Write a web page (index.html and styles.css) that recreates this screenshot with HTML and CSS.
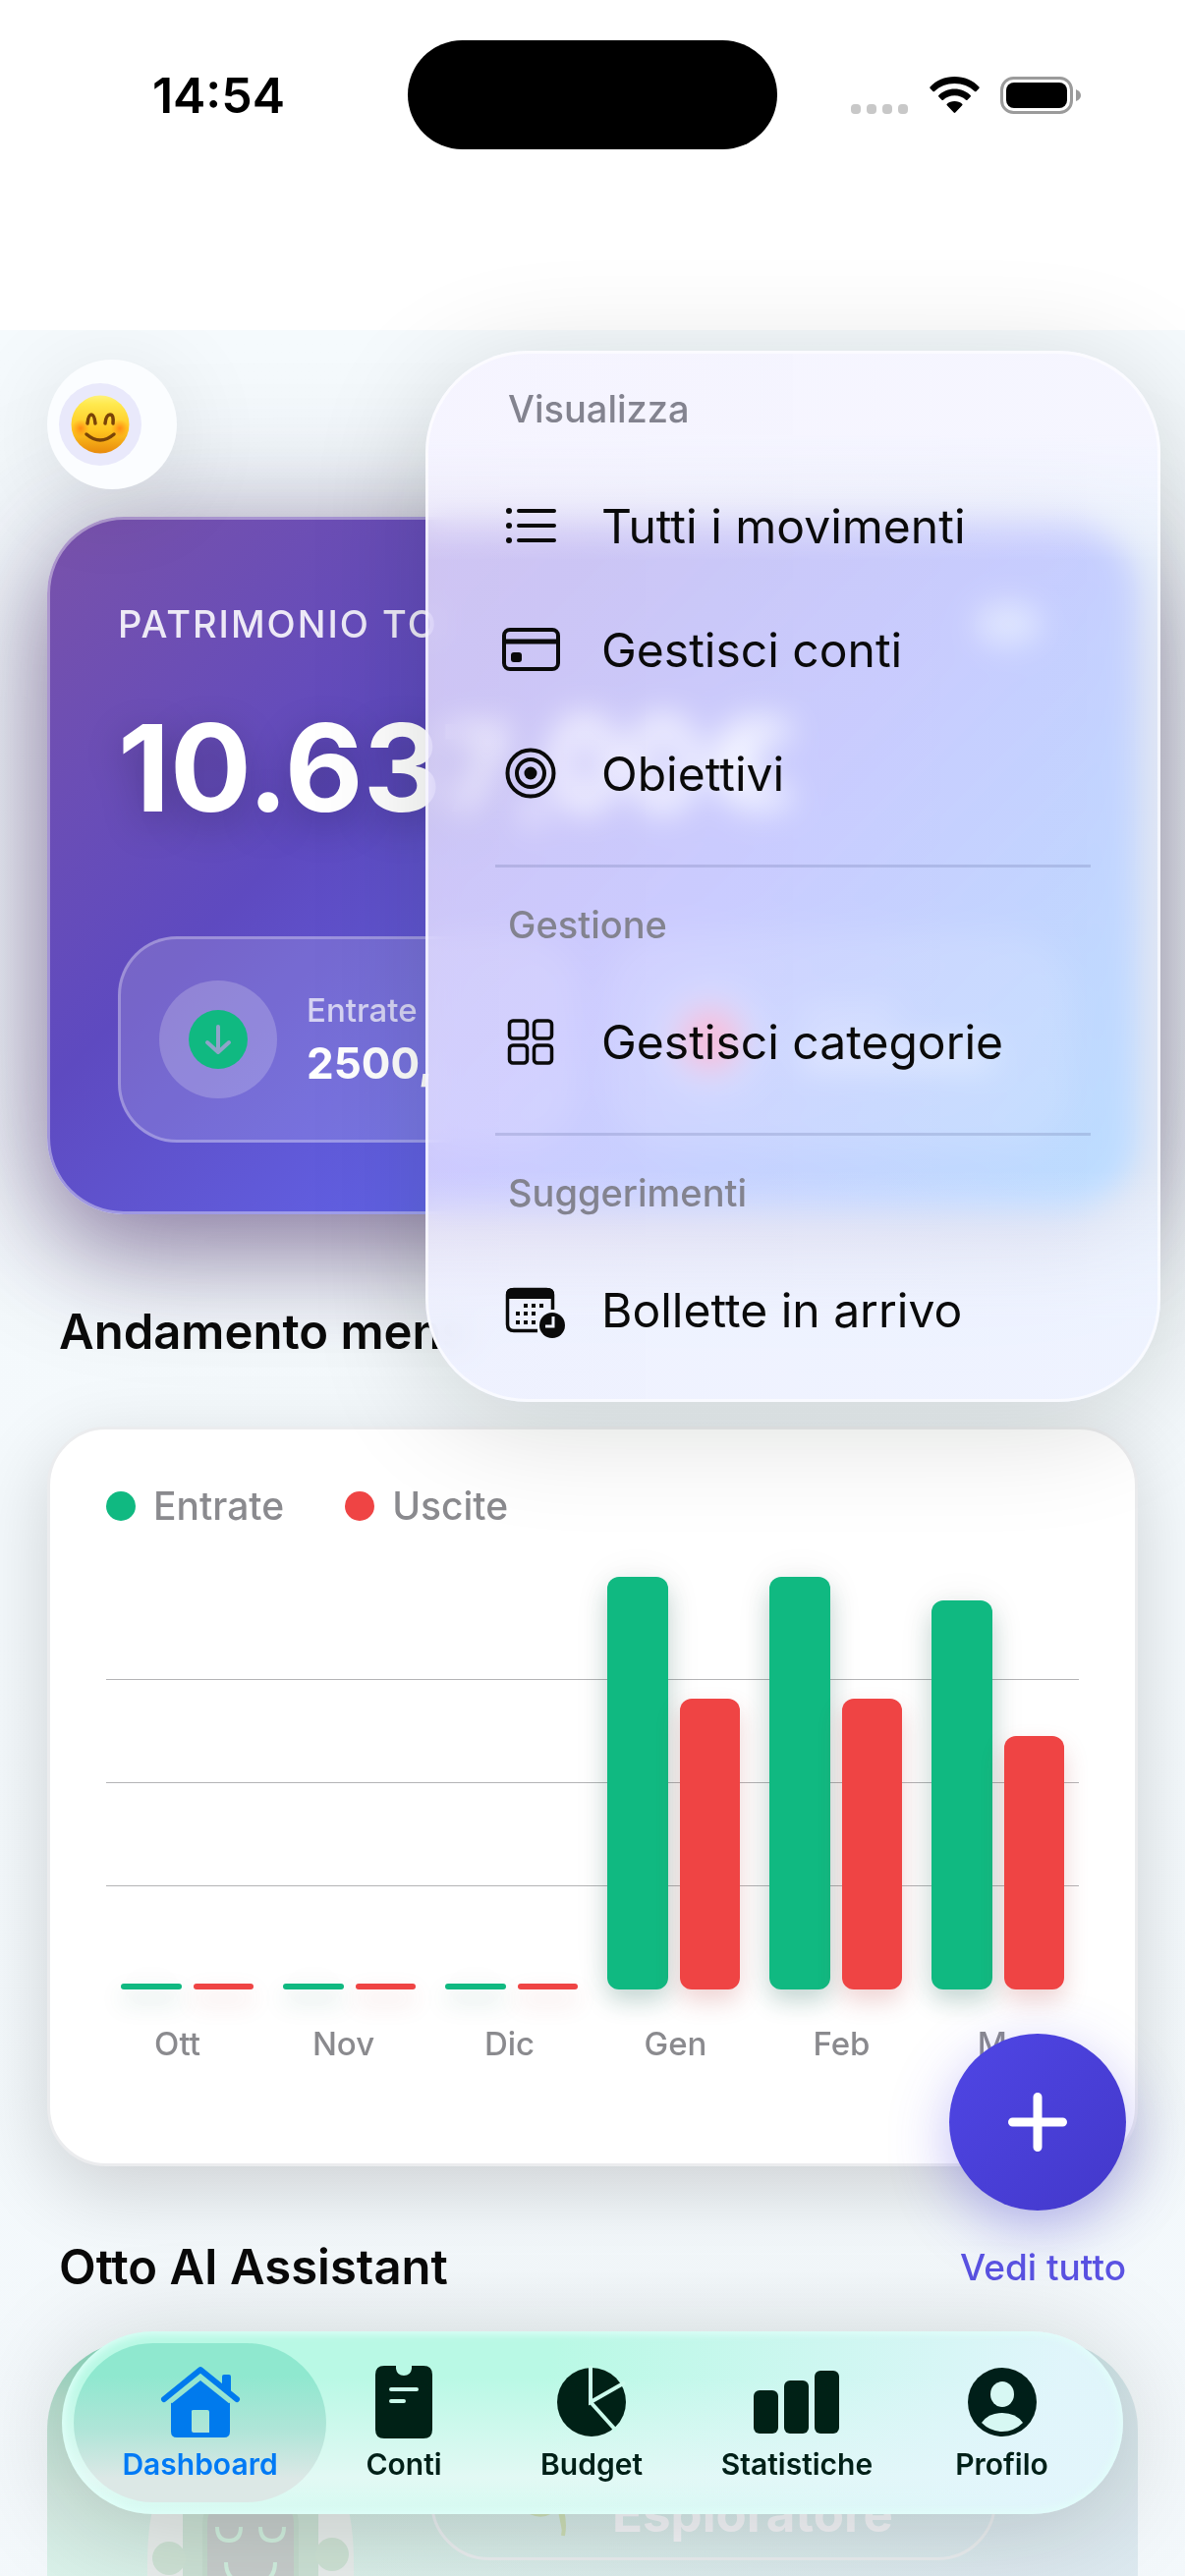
FILE: index.html
```html
<!DOCTYPE html>
<html lang="it">
<head>
    <meta charset="UTF-8">
    <meta name="viewport" content="width=device-width, initial-scale=1">
    <title>Dashboard</title>
    <link rel="stylesheet" href="styles.css">
</head>
<body>
<div class="screen">
    <header class="status-bar">
        <span class="time">14:54</span>
        <span class="island"></span>
        <div class="status-icons">
            <svg width="59" height="38" viewBox="0 0 59 38"><g fill="#c8c8c8"><rect y="28" width="10" height="10" rx="4"/><rect x="16" y="28" width="10" height="10" rx="4"/><rect x="32" y="28" width="10" height="10" rx="4"/><rect x="48" y="28" width="10" height="10" rx="4"/></g></svg>
            <svg width="51" height="38" viewBox="0 0 51 38"><path d="M25.500 0C35.500 0 44.500 4 50.500 10.500Q51 11.300 50.400 12L47.500 15Q46.700 15.600 46 15C40.500 9.800 33.500 7 25.500 7S10.500 9.800 5 15Q4.300 15.600 3.500 15L.600 12Q0 11.300 .500 10.500C6.500 4 15.500 0 25.500 0Z"/><path d="M25.500 12.500C32 12.500 37.500 15 41.700 19Q42.300 19.800 41.700 20.500L38.500 23.700Q37.800 24.300 37 23.700C34 21 30 19.300 25.500 19.300S17 21 14 23.700Q13.200 24.300 12.500 23.700L9.300 20.500Q8.700 19.800 9.300 19C13.500 15 19 12.500 25.500 12.500Z"/><path d="M25.500 25C28.700 25 31.200 26 33.200 27.700Q34 28.500 33.200 29.300L26.300 36.500Q25.500 37.300 24.700 36.500L17.800 29.300Q17 28.500 17.800 27.700C19.800 26 22.300 25 25.500 25Z"/></svg>
            <svg width="82" height="38" viewBox="0 0 82 38"><rect x="1.500" y="1.500" width="71" height="35" rx="12" fill="none" stroke="#9b9b9b" stroke-width="3"/><rect x="6" y="6" width="62" height="26" rx="8"/><path d="M77 13Q82 15 82 19T77 25Z" fill="#9b9b9b"/></svg>
        </div>
    </header>

    <main class="content">
        <button class="avatar" aria-label="Profilo">
            <span class="avatar-face">
                <svg width="60" height="60" viewBox="0 0 60 60">
                    <defs>
                        <linearGradient id="face" x1="0" y1="0" x2="0" y2="1"><stop offset="0" stop-color="#fff27a"/><stop offset=".15" stop-color="#ffe94e"/><stop offset=".6" stop-color="#ffc61f"/><stop offset="1" stop-color="#e88a0c"/></linearGradient>
                        <radialGradient id="cheek"><stop offset="0" stop-color="#ff7a10" stop-opacity=".8"/><stop offset="1" stop-color="#ff8a10" stop-opacity="0"/></radialGradient>
                    </defs>
                    <circle cx="30" cy="30" r="29.500" fill="url(#face)"/>
                    <circle cx="10" cy="34" r="9" fill="url(#cheek)"/><circle cx="50" cy="34" r="9" fill="url(#cheek)"/>
                    <g fill="none" stroke="#7a4408" stroke-linecap="round" stroke-width="3.500"><path d="M17 29Q18 20 21 20T25 29"/><path d="M35 29Q36 20 40 20T43 29"/><path d="M16 40Q30 52 44 40"/></g>
                </svg>
            </span>
        </button>

        <section class="balance">
            <div class="balance-label"><span>PATRIMONIO TO</span>
                <svg class="eye" width="72" height="54" viewBox="0 0 72 54"><path d="M3 27Q36-12 69 27Q36 66 3 27Z" fill="#fff"/><circle cx="36" cy="27" r="10" fill="#5b6fe0"/></svg>
            </div>
            <div class="balance-amount">
                <span>10.637</span>
                <svg width="280" height="110" viewBox="0 0 280 110"><g fill="none" stroke="#fff" stroke-width="24"><path d="M6 86V110"/><ellipse cx="62" cy="50" rx="26" ry="40"/><ellipse cx="142" cy="50" rx="26" ry="40"/><path d="M270 20Q205 0 205 50T270 80M190 40H240M190 60H240"/></g></svg>
            </div>
            <div class="tiles">
                <div class="tile">
                    <span class="tile-icon"><svg width="60" height="60" viewBox="0 0 60 60"><circle cx="30" cy="30" r="30" fill="#10b981"/><path d="M30 17V43M19 33L30 43L41 33" fill="none" stroke="#8fa3c9" stroke-width="4" stroke-linecap="round" stroke-linejoin="round"/></svg></span>
                    <div><div class="tile-label">Entrate</div><div class="tile-value">2500,</div></div>
                </div>
                <div class="tile">
                    <span class="tile-icon"><svg width="60" height="60" viewBox="0 0 60 60"><circle cx="30" cy="30" r="30" fill="#ff2f68"/></svg></span>
                    <svg width="200" height="80" viewBox="0 0 200 80"><rect y="8" width="100" height="16" rx="8" fill="#fff" opacity=".4"/><rect y="44" width="200" height="26" rx="13" fill="#fff" opacity=".6"/></svg>
                </div>
            </div>
        </section>

        <div class="section-title">
            <h2>Andamento mens</h2>
        </div>

        <section class="chart">
            <div class="legend">
                <span class="key income">Entrate</span>
                <span class="key expense">Uscite</span>
            </div>
            <div class="plot">
                <div class="month"><span class="bar income" style="height: 1.5%"></span><span class="bar expense" style="height: 1.5%"></span></div>
                <div class="month"><span class="bar income" style="height: 1.5%"></span><span class="bar expense" style="height: 1.5%"></span></div>
                <div class="month"><span class="bar income" style="height: 1.5%"></span><span class="bar expense" style="height: 1.5%"></span></div>
                <div class="month"><span class="bar income" style="height: 100%"></span><span class="bar expense" style="height: 70.5%"></span></div>
                <div class="month"><span class="bar income" style="height: 100%"></span><span class="bar expense" style="height: 70.5%"></span></div>
                <div class="month"><span class="bar income" style="height: 94.3%"></span><span class="bar expense" style="height: 61.5%"></span></div>
            </div>
            <div class="months">
                <span>Ott</span><span>Nov</span><span>Dic</span><span>Gen</span><span>Feb</span><span>Mar</span>
            </div>
        </section>

        <div class="section-title">
            <h2>Otto AI Assistant</h2>
            <a href="#otto">Vedi tutto</a>
        </div>

        <section class="otto" id="otto">
            <svg class="robot" width="210" height="180" viewBox="0 0 210 180">
                <path d="M0 130Q0 20 60 20H150Q210 20 210 130V180H0Z" fill="#e9eeed"/>
                <path d="M36 180V20H174V180Z" fill="#cde2d6"/>
                <rect x="56" y="58" width="98" height="150" rx="30" fill="#c6dccf"/>
                <rect x="61" y="62" width="88" height="150" rx="26" fill="#c8cecd"/>
                <circle cx="22" cy="124" r="17" fill="#cfe3d6"/><circle cx="188" cy="120" r="17" fill="#cfe3d6"/>
                <g fill="none" stroke="#d2f0e0" stroke-width="4"><path d="M71 92Q71 106 83 106T95 92"/><path d="M115 92Q115 106 127 106T139 92"/><path d="M80 128Q80 150 105 150T130 128"/></g>
            </svg>
            <div class="level">
                <svg width="58" height="80" viewBox="0 0 58 80"><path d="M38 72Q42 50 30 32M30 40Q10 34 4 48Q22 56 32 40" fill="#cfdfb8" stroke="#cfdfb8" stroke-width="4"/></svg>
                <span>Esploratore</span>
            </div>
        </section>
    </main>

    <div class="menu" role="menu">
        <div class="menu-title">Visualizza</div>
        <button class="menu-item" role="menuitem">
            <svg viewBox="0 0 60 60"><g stroke="#0a0a0a" stroke-width="4" stroke-linecap="round"><path d="M18 15H54M18 30H54M18 45H54"/></g><g fill="#0a0a0a"><circle cx="8" cy="15" r="3"/><circle cx="8" cy="30" r="3"/><circle cx="8" cy="45" r="3"/></g></svg>
            <span>Tutti i movimenti</span>
        </button>
        <button class="menu-item" role="menuitem">
            <svg viewBox="0 0 60 60"><rect x="3" y="10" width="55" height="40" rx="6" fill="none" stroke="#0a0a0a" stroke-width="4"/><path d="M3 22H58" stroke="#0a0a0a" stroke-width="5"/><rect x="10" y="33" width="11" height="10" rx="3" fill="#0a0a0a"/></svg>
            <span>Gestisci conti</span>
        </button>
        <button class="menu-item" role="menuitem">
            <svg viewBox="0 0 60 60"><g fill="none" stroke="#0a0a0a" stroke-width="4"><circle cx="30" cy="30" r="23.500"/><circle cx="30" cy="30" r="14"/></g><circle cx="30" cy="30" r="6.500" fill="#0a0a0a"/></svg>
            <span>Obiettivi</span>
        </button>
        <hr>
        <div class="menu-title">Gestione</div>
        <button class="menu-item" role="menuitem">
            <svg viewBox="0 0 60 60"><g fill="none" stroke="#0a0a0a" stroke-width="3.500"><rect x="8.500" y="9" width="18" height="18" rx="3.500"/><rect x="33.500" y="9" width="18" height="18" rx="3.500"/><rect x="8.500" y="34" width="18" height="18" rx="3.500"/><rect x="33.500" y="34" width="18" height="18" rx="3.500"/></g></svg>
            <span>Gestisci categorie</span>
        </button>
        <hr>
        <div class="menu-title">Suggerimenti</div>
        <button class="menu-item" role="menuitem">
            <svg viewBox="0 0 60 60"><path d="M37 51.500H13Q6.500 51.500 6.500 45V15Q6.500 9.500 13 9.500H46Q52.500 9.500 52.500 15V30" fill="none" stroke="#0a0a0a" stroke-width="3.500"/><path d="M5 19V15Q5 8 12 8H47Q54 8 54 15V19Z" fill="#0a0a0a"/><g fill="#0a0a0a"><rect x="23" y="24" width="4" height="4"/><rect x="31" y="24" width="4" height="4"/><rect x="39" y="24" width="4" height="4"/><rect x="15" y="32" width="4" height="4"/><rect x="23" y="32" width="4" height="4"/><rect x="31" y="32" width="4" height="4"/><rect x="15" y="41" width="4" height="4"/><rect x="23" y="41" width="4" height="4"/><rect x="31" y="41" width="4" height="4"/><circle cx="52" cy="46" r="13"/></g><path d="M53 37V47H45" fill="none" stroke="#f0f2ff" stroke-width="3"/></svg>
            <span>Bollette in arrivo</span>
        </button>
    </div>

    <button class="fab" aria-label="Aggiungi">
        <svg width="60" height="60" viewBox="0 0 60 60"><path d="M30 4.500V55.500M4.500 30H55.500" stroke="#fff" stroke-width="9" stroke-linecap="round"/></svg>
    </button>

    <nav class="tabs">
        <a class="tab active" href="#dashboard">
            <svg width="82" height="74" viewBox="0 0 82 74"><g fill="#007aed"><path d="M11 38L41 13L71 38V67Q71 73 65 73H17Q11 73 11 67ZM32 46V66Q32 68 34 68H50V47Q50 45 48 45H34Q32 45 32 46Z" fill-rule="evenodd"/><path d="M63 11Q63 9 65 9H70Q72 9 72 11V31L63 23Z"/></g><path d="M11 37L41 13L71 37" fill="none" stroke="#97e5d0" stroke-width="3"/><path d="M4 34L41 4L78 34" fill="none" stroke="#007aed" stroke-width="6" stroke-linecap="round" stroke-linejoin="round"/></svg>
            <span>Dashboard</span>
        </a>
        <a class="tab" href="#conti">
            <svg width="58" height="74" viewBox="0 0 58 74"><path d="M9 0H21V3Q22 10 29 10T37 3V0H49Q58 0 58 9V65Q58 74 49 74H9Q0 74 0 65V9Q0 0 9 0Z" fill="#002116"/><path d="M16 24H42M16 36H29" stroke="#cbfbec" stroke-width="4" stroke-linecap="round"/></svg>
            <span>Conti</span>
        </a>
        <a class="tab" href="#budget">
            <svg width="72" height="74" viewBox="0 0 72 74"><circle cx="36" cy="37" r="35" fill="#002116"/><path d="M35 0V37L70 17M35 37L61 66" fill="none" stroke="#cbfbec" stroke-width="4"/></svg>
            <span>Budget</span>
        </a>
        <a class="tab" href="#statistiche">
            <svg width="88" height="74" viewBox="0 0 88 74"><g fill="#002116"><rect y="25" width="25" height="44" rx="6"/><rect x="31" y="15" width="25" height="54" rx="6"/><rect x="62" y="5" width="25" height="64" rx="6"/></g></svg>
            <span>Statistiche</span>
        </a>
        <a class="tab" href="#profilo">
            <svg width="72" height="74" viewBox="0 0 72 74"><circle cx="36" cy="37" r="35" fill="#001f19"/><ellipse cx="36" cy="29" rx="12" ry="13" fill="#d7f8f3"/><path d="M15 58Q22 48 36 48T57 58Q48 67 36 67T15 58Z" fill="#d7f8f3"/></svg>
            <span>Profilo</span>
        </a>
    </nav>
</div>
</body>
</html>
```
FILE: styles.css
```css
* {
    box-sizing: border-box;
}
body {
    margin: 0;
    font-family: Inter, "Liberation Sans", sans-serif;
    color: #0a0a0a;
    background: #fff;
}
button {
    font-family: inherit;
    border: 0;
    padding: 0;
    background: none;
    color: inherit;
}
a {
    text-decoration: none;
}
svg {
    display: block;
    flex: none;
}
.screen {
    position: relative;
    height: 100vh;
    overflow: hidden;
}

/* status bar */
.status-bar {
    height: 336px;
    padding-top: 41px;
    display: grid;
    grid-template-columns: 1fr 376px 1fr;
    grid-template-rows: 111px;
    align-items: center;
}
.time {
    padding-left: 30px;
    text-align: center;
    font-size: 50px;
    font-weight: 600;
    color: #000;
}
.island {
    height: 111px;
    border-radius: 56px;
    background: #000;
}
.status-icons {
    display: flex;
    justify-content: center;
    gap: 21px;
    padding-right: 32px;
}

/* content */
.content {
    padding: 30px 48px;
    background: linear-gradient(#f5fafd, #f3f8fb);
    overflow: hidden;
}
.avatar {
    position: relative;
    display: flex;
    align-items: center;
    width: 132px;
    height: 132px;
    padding-left: 12px;
    border-radius: 50%;
    background: #fbfdff;
    box-shadow: 0 12px 100px rgba(0, 0, 0, 0.1);
    margin-bottom: 28px;
}
.avatar-face {
    display: flex;
    align-items: center;
    justify-content: center;
    width: 84px;
    height: 84px;
    border-radius: 50%;
    background: #e9e9fb;
}

/* balance card */
.balance {
    margin-bottom: 15px;
    padding: 82px 69px 70px;
    border: 3px solid rgba(255, 255, 255, 0.4);
    border-radius: 78px;
    background: linear-gradient(135deg, #7952aa 0%, #5e4ac0 32%, #6161e4 58%, #459df4 100%) border-box;
    box-shadow: 0 36px 100px rgba(75, 45, 110, 0.5), 0 10px 160px rgba(40, 30, 70, 0.26);
    color: #fff;
}
.balance-label {
    display: flex;
    justify-content: space-between;
    align-items: center;
    height: 48px;
    font-size: 38px;
    font-weight: 500;
    letter-spacing: 2px;
    color: rgba(255, 255, 255, 0.88);
}
.eye {
    margin-right: 24px;
}
.balance-amount {
    display: flex;
    align-items: center;
    gap: 12px;
    margin: 48px 0 96px;
    font-size: 123px;
    line-height: 150px;
    font-weight: 700;
    text-shadow: 0 12px 40px rgba(0, 0, 0, 0.25);
}
.tiles {
    display: grid;
    grid-template-columns: 1fr 1fr;
    gap: 36px;
}
.tile {
    display: flex;
    align-items: center;
    gap: 30px;
    height: 210px;
    padding-left: 39px;
    border: 3px solid rgba(255, 255, 255, 0.28);
    border-radius: 60px;
    background: rgba(255, 255, 255, 0.15);
}
.tile-icon {
    display: flex;
    align-items: center;
    justify-content: center;
    width: 120px;
    height: 120px;
    border-radius: 50%;
    background: rgba(255, 255, 255, 0.2);
}
.tile-label {
    font-size: 33px;
    line-height: 48px;
    font-weight: 500;
    color: rgba(255, 255, 255, 0.7);
}
.tile-value {
    font-size: 44px;
    line-height: 60px;
    font-weight: 700;
}

/* section headings */
.section-title {
    display: flex;
    justify-content: space-between;
    align-items: center;
    height: 201px;
    padding: 9px 12px 0;
}
.section-title h2 {
    margin: 0;
    font-size: 49px;
    line-height: 60px;
    font-weight: 600;
}
.section-title a {
    font-size: 37px;
    font-weight: 500;
    color: #5b53e3;
}

/* chart */
.chart {
    padding: 54px 57px 98px;
    border: 3px solid #ebecee;
    border-radius: 60px;
    background: #fff;
    box-shadow: 0 24px 80px rgba(0, 0, 0, 0.16);
}
.chart + .section-title {
    height: 178px;
    padding-top: 27px;
}
.legend {
    display: flex;
    gap: 62px;
    height: 48px;
    font-size: 39px;
    line-height: 48px;
    font-weight: 500;
    color: #8a8a8e;
}
.key {
    display: flex;
    align-items: center;
    gap: 18px;
}
.key::before {
    content: "";
    width: 30px;
    height: 30px;
    border-radius: 50%;
    background: currentColor;
}
.key.income::before {
    background: #10b981;
}
.key.expense::before {
    background: #ef4444;
}
.plot {
    display: grid;
    grid-template-columns: repeat(6, 1fr);
    height: 420px;
    margin-top: 48px;
    background: repeating-linear-gradient(transparent 0 104px, #b4b4b6 104px 105px) 0 0 / 100% 400px no-repeat;
}
.month {
    display: flex;
    align-items: flex-end;
    gap: 12px;
    height: 420px;
    padding: 0 15px;
}
.bar {
    flex: 1;
    border-radius: 12px;
}
.bar.income {
    background: #10b981;
    box-shadow: 0 12px 24px rgba(16, 100, 80, 0.22), 0 0 40px rgba(0, 0, 0, 0.06);
}
.bar.expense {
    background: #ef4444;
    box-shadow: 0 12px 24px rgba(180, 60, 60, 0.22);
}
.months {
    display: grid;
    grid-template-columns: repeat(6, 1fr);
    margin: 31px -12px 0;
    font-size: 33px;
    line-height: 48px;
    font-weight: 500;
    text-align: center;
    color: #8a8a8e;
}

/* Otto card */
.otto {
    position: relative;
    height: 480px;
    border-radius: 90px;
    background: linear-gradient(100deg, rgba(222, 232, 242, 0) 20%, rgba(222, 232, 242, 0.8) 85%), linear-gradient(#86d6bb 0, #b8dfd0 60px, #d2e8e0 150px, #daf2ea 240px);
}
.robot {
    position: absolute;
    left: 102px;
    top: 97px;
}
.level {
    position: absolute;
    left: 390px;
    top: 103px;
    display: flex;
    align-items: flex-end;
    gap: 30px;
    width: 576px;
    height: 120px;
    padding: 0 0 14px 94px;
    border: 3px solid #eceff2;
    border-radius: 60px;
    font-size: 51px;
    font-weight: 700;
    color: #f6f6fa;
}

/* popup menu */
.menu {
    position: absolute;
    top: 357px;
    right: 25px;
    width: 748px;
    padding: 1px 0 31px;
    border-radius: 104px;
    background: linear-gradient(rgba(246, 245, 255, 0.85) 8%, rgba(246, 245, 255, 0) 20%, rgba(240, 242, 255, 0) 78%, rgba(238, 242, 255, 0.8) 92%), linear-gradient(90deg, rgba(240, 236, 255, 0.76), rgba(234, 244, 255, 0.74));
    backdrop-filter: blur(16px) saturate(1.2);
    box-shadow: 0 20px 120px rgba(0, 20, 10, 0.16), inset 0 0 0 3px rgba(255, 255, 255, 0.65);
}
.menu-title {
    height: 114px;
    padding-left: 84px;
    font-size: 38px;
    line-height: 117px;
    font-weight: 500;
    color: #83838f;
}
.menu-item {
    display: flex;
    align-items: center;
    gap: 42px;
    width: 100%;
    height: 126px;
    padding-left: 77px;
    font-size: 48px;
    text-align: left;
}
.menu-item svg {
    width: 60px;
    height: 60px;
    overflow: visible;
}
.menu hr {
    height: 3px;
    margin: 30px 71px 0;
    border: 0;
    background: rgba(80, 90, 140, 0.2);
}

/* floating button */
.fab {
    position: absolute;
    right: 60px;
    bottom: 372px;
    display: flex;
    align-items: center;
    justify-content: center;
    width: 180px;
    height: 180px;
    border-radius: 50%;
    background: linear-gradient(135deg, #4f46e5, #4338ca);
    box-shadow: 0 18px 60px rgba(79, 70, 229, 0.35);
}

/* tab bar */
.tabs {
    position: absolute;
    left: 63px;
    right: 63px;
    bottom: 63px;
    display: grid;
    grid-template-columns: 257fr 158fr 224fr 194fr 223fr;
    padding: 12px;
    border-radius: 93px;
    background: linear-gradient(100deg, rgba(226, 245, 252, 0) 45%, rgba(226, 245, 252, 0.95) 92%), linear-gradient(#b9f9e5 25%, #e2f9f4 80%, #d5faf1);
    box-shadow: 0 12px 110px rgba(0, 20, 10, 0.18), inset 0 0 9px 3px rgba(225, 255, 250, 0.9);
}
.tab {
    display: flex;
    flex-direction: column;
    align-items: center;
    height: 162px;
    padding-top: 23px;
    font-size: 30px;
    line-height: 40px;
    font-weight: 600;
    color: #002018;
}
.tab span {
    margin-top: 6px;
}
.tab.active {
    border-radius: 81px;
    background: linear-gradient(#8fe8cf 20%, #b0e5d8 55%, #dce8e6 85%);
    color: #007af5;
}
```
